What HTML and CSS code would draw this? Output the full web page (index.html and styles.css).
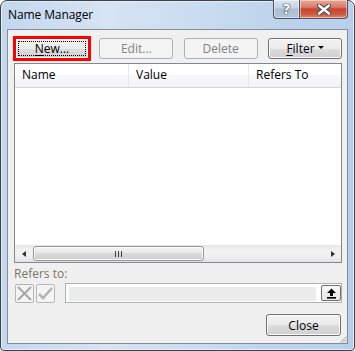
FILE: index.html
```html
<!DOCTYPE html>
<html lang="en">
<head>
    <meta charset="UTF-8">
    <meta name="viewport" content="width=device-width, initial-scale=1.0">
    <title>Name Manager</title>
    <link rel="stylesheet" href="styles.css">
</head>
<body>
    <div class="window">
        <div class="titlebar">
            <span class="title">Name Manager</span>
            <div class="caption-btns">
                <div class="cap-btn help">?</div>
                <div class="cap-btn close">
                    <svg width="14" height="11" viewBox="0 0 14 11">
                        <path d="M2 1.5 L12 9.5 M12 1.5 L2 9.5" stroke="#3a4656" stroke-width="4.5" stroke-linecap="round"/>
                        <path d="M2 1.5 L12 9.5 M12 1.5 L2 9.5" stroke="#fff" stroke-width="2.4" stroke-linecap="round"/>
                    </svg>
                </div>
            </div>
        </div>

        <div class="client">
            <div class="toolbar">
                <button class="btn focused"><span class="focus-rect"><u>N</u>ew...</span></button>
                <button class="btn" disabled>Edit...</button>
                <button class="btn" disabled>Delete</button>
                <button class="btn"><u>F</u>ilter <span class="drop"></span></button>
            </div>

            <div class="list">
                <div class="list-head">
                    <div class="col">Name</div>
                    <div class="col">Value</div>
                    <div class="col last">Refers To</div>
                </div>
                <div class="list-body"></div>
                <div class="hscroll">
                    <div class="arrow"><span class="tri-left"></span></div>
                    <div class="track">
                        <div class="thumb"><span class="grip"></span></div>
                    </div>
                    <div class="arrow"><span class="tri-right"></span></div>
                </div>
            </div>

            <div class="refers-label">Refers to:</div>
            <div class="refers-row">
                <div class="mini-btn">
                    <svg width="17" height="17" viewBox="0 0 17 17">
                        <path d="M2 2 L15 15 M15 2 L2 15" stroke="#a7a7a7" stroke-width="2"/>
                    </svg>
                </div>
                <div class="mini-btn">
                    <svg width="17" height="17" viewBox="0 0 17 17">
                        <path d="M2 9 L6 13 L15 3" stroke="#b4b4b4" stroke-width="2.6" fill="none"/>
                    </svg>
                </div>
                <div class="refers-input">
                    <div class="refers-fill"></div>
                    <div class="collapse-btn">
                        <svg width="11" height="11" viewBox="0 0 11 11">
                            <path d="M5.5 0.5 L10 5 L7 5 L7 8 L4 8 L4 5 L1 5 Z" fill="#000"/>
                            <rect x="1" y="9" width="9" height="1.6" fill="#000"/>
                        </svg>
                    </div>
                </div>
            </div>

            <div class="footer">
                <button class="btn">Close</button>
            </div>

            <svg class="grip-corner" width="7" height="7" viewBox="0 0 7 7">
                <path d="M6.5 0.5 L0.5 6.5 M6.5 3 L3 6.5 M6.5 5.5 L5.5 6.5" stroke="#a0a0a0" stroke-width="1"/>
            </svg>
        </div>
    </div>
</body>
</html>
```

FILE: styles.css
```css
body {
    margin: 0;
    background: #fff;
    font-family: "Open Sans", "Noto Sans", sans-serif;
    font-size: 12px;
}
.window {
    width: 355px;
    height: 351px;
    box-sizing: border-box;
    border: 1px solid #3d4248;
    border-radius: 7px 7px 4px 4px;
    background: linear-gradient(90deg, #c2d7ee 0%, #d6e4f3 30%, #cadcf0 55%, #bdd3ec 80%, #b7cfea 100%);
    box-shadow: inset 0 0 0 1px #e4eef8;
    padding: 0 6px 6px 6px;
    display: flex;
    flex-direction: column;
}
.titlebar {
    height: 28px;
    display: flex;
    align-items: flex-start;
}
.title {
    padding: 6px 0 0 1px;
    line-height: 16px;
    color: #000;
    letter-spacing: -0.1px;
}
.caption-btns {
    margin-left: auto;
    margin-top: -1px;
    display: flex;
}
.cap-btn {
    height: 18px;
    border: 1px solid #4a5668;
    border-top: none;
    display: flex;
    align-items: center;
    justify-content: center;
    box-shadow: inset 0 0 0 1px rgba(255, 255, 255, 0.45);
}
.help {
    width: 25px;
    border-right: none;
    border-radius: 0 0 0 4px;
    background: linear-gradient(#dbe5f1 0%, #c3d2e4 45%, #a9bbd2 50%, #b6c8de 100%);
    color: #fff;
    font-family: "DejaVu Sans", sans-serif;
    font-weight: bold;
    font-size: 14px;
    text-shadow: 0 0 1px #2f3a48, 0 0 1px #2f3a48, 0 0 1px #2f3a48;
}
.close {
    width: 47px;
    border-radius: 0 0 4px 0;
    background: linear-gradient(#e9a996 0%, #da7b66 40%, #c6432c 50%, #d05a42 80%, #e08870 100%);
}
.client {
    flex: 1;
    position: relative;
    border: 1px solid #858d98;
    background: #f0f0f0;
    padding-top: 8px;
    display: flex;
    flex-direction: column;
}
.toolbar {
    display: flex;
    justify-content: space-between;
    padding: 0 5px 0 7px;
}
.btn {
    width: 74px;
    height: 21px;
    padding: 0;
    border: 1px solid #707070;
    border-radius: 3px;
    background: linear-gradient(#f2f2f2 0%, #ebebeb 50%, #dddddd 50%, #cfcfcf 100%);
    box-shadow: inset 0 0 0 1px #fcfcfc;
    font-family: "Open Sans", "Noto Sans", sans-serif;
    font-size: 12px;
    color: #000;
    display: flex;
    align-items: center;
    justify-content: center;
}
.btn:disabled {
    border-color: #adb2b5;
    background: #f4f4f4;
    box-shadow: none;
    color: #838383;
}
.btn u {
    text-decoration-thickness: 1px;
    text-underline-offset: 2px;
}
.focused {
    border-color: #f00;
    border-radius: 0;
    outline: 2px solid #f00;
    box-shadow: inset 0 0 0 1px #fcfcfc;
}
.focus-rect {
    width: 68px;
    height: 15px;
    line-height: 14px;
    border: 1px dotted #000;
    box-sizing: border-box;
}
.drop {
    display: inline-block;
    margin-left: 3px;
    margin-bottom: 2px;
    border-left: 3px solid transparent;
    border-right: 3px solid transparent;
    border-top: 3px solid #000;
}
.list {
    margin: 4px 5px 0 6px;
    height: 200px;
    box-sizing: border-box;
    border: 1px solid #828790;
    background: #fff;
    display: flex;
    flex-direction: column;
}
.list-head {
    height: 23px;
    display: grid;
    grid-template-columns: 114px 120px 1fr;
    background: linear-gradient(#ffffff 0%, #ffffff 45%, #f7f8f9 50%, #f3f4f6 100%);
    border-bottom: 1px solid #d5d5d5;
}
.col {
    padding-left: 7px;
    line-height: 22px;
    border-right: 1px solid #e5e7ea;
    color: #000;
}
.col.last {
    border-right: none;
}
.list-body {
    flex: 1;
}
.hscroll {
    height: 17px;
    display: flex;
    background: linear-gradient(#e6e6e6, #f2f2f2 30%, #f0f0f0 70%, #e2e2e2);
}
.arrow {
    width: 17px;
    display: flex;
    align-items: center;
    justify-content: center;
}
.tri-left {
    border-top: 3.5px solid transparent;
    border-bottom: 3.5px solid transparent;
    border-right: 4px solid #303030;
}
.tri-right {
    border-top: 3.5px solid transparent;
    border-bottom: 3.5px solid transparent;
    border-left: 4px solid #303030;
}
.track {
    flex: 1;
    padding: 1px 1px 1px 1px;
    display: flex;
}
.thumb {
    width: 171px;
    box-sizing: border-box;
    border: 1px solid #979797;
    border-radius: 3px;
    background: linear-gradient(#f3f3f3 0%, #e8e8e8 50%, #d9d9d9 50%, #cfcfcf 100%);
    box-shadow: inset 0 0 0 1px #fafafa;
    display: flex;
    align-items: center;
    justify-content: center;
}
.grip {
    width: 7px;
    height: 6px;
    background: repeating-linear-gradient(90deg, #3c3c3c 0 1px, transparent 1px 3px);
}
.refers-label {
    margin: 3px 0 0 6px;
    line-height: 16px;
    color: #7d7468;
}
.refers-row {
    margin-top: 1px;
    display: flex;
    align-items: flex-end;
    padding: 0 5px 0 7px;
    height: 20px;
}
.mini-btn {
    width: 19px;
    height: 19px;
    box-sizing: border-box;
    margin-right: 2px;
    border: 1px solid #b6b6b6;
    border-radius: 2px;
    background: #f4f4f4;
    display: flex;
    align-items: center;
    justify-content: center;
}
.refers-input {
    flex: 1;
    height: 20px;
    margin-left: 8px;
    box-sizing: border-box;
    border: 1px solid #adb2b5;
    background: #fff;
    padding: 3px 0 1px 3px;
    display: flex;
}
.refers-fill {
    flex: 1;
    background: #ececec;
    margin-right: 5px;
}
.collapse-btn {
    width: 20px;
    height: 16px;
    margin-top: -2px;
    box-sizing: border-box;
    border: 1px solid #707070;
    border-radius: 2px;
    background: linear-gradient(#f8f8f8, #e6e6e6);
    display: flex;
    align-items: center;
    justify-content: center;
}
.footer {
    margin-top: 11px;
    padding-right: 6px;
    display: flex;
    justify-content: flex-end;
}
.footer .btn {
    width: 75px;
    height: 22px;
}
.grip-corner {
    position: absolute;
    right: 0;
    bottom: 0;
}
```
